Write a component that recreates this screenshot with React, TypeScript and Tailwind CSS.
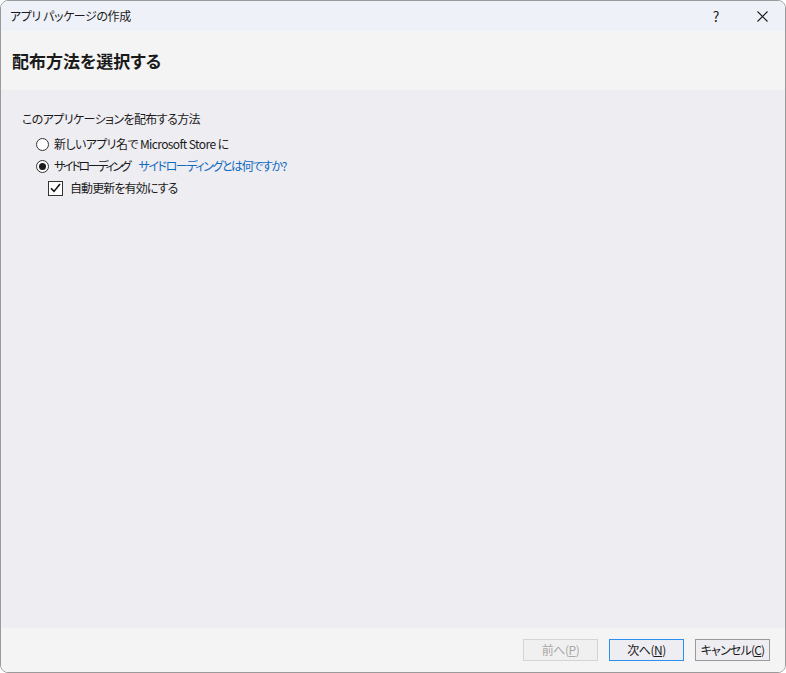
const font = "font-['Segoe_UI','Noto_Sans_CJK_JP','Noto_Sans',sans-serif] [font-feature-settings:'palt']";

function Radio({ checked }: { checked?: boolean }) {
  return (
    <span className="flex h-[13px] w-[13px] items-center justify-center rounded-full border border-[#333] bg-white">
      {checked && <span className="h-[7px] w-[7px] rounded-full bg-[#1a1a1a]" />}
    </span>
  );
}

export default function App() {
  return (
    <div className={`h-[673px] w-[786px] ${font} text-[#1a1a1a]`}>
      <div className="flex h-full w-full flex-col overflow-hidden rounded-t-[8px] rounded-b-[8px] border border-[#9a9a9a]">
        {/* title bar */}
        <div className="flex h-[30px] shrink-0 items-center bg-[#eef2f8] pl-[9px] text-[12px]">
          <span className="flex-1 tracking-[-0.4px]">アプリ パッケージの作成</span>
          <span className="w-[46px] text-center text-[14px]">?</span>
          <span className="flex w-[46px] items-center justify-center">
            <svg width="11" height="11" viewBox="0 0 11 11" stroke="#1a1a1a" strokeWidth="1.1">
              <path d="M0.5 0.5L10.5 10.5M10.5 0.5L0.5 10.5" />
            </svg>
          </span>
        </div>

        {/* header */}
        <div className="flex h-[59px] shrink-0 items-center bg-[#f4f4f4] pl-[11px] text-[17px] font-bold">
          配布方法を選択する
        </div>

        {/* content */}
        <div className="flex flex-1 flex-col bg-[#eeedf2] pl-[21px] pt-[20px] text-[12px]">
          <div className="h-[18px] leading-[18px] tracking-[-0.6px]">このアプリケーションを配布する方法</div>
          <div className="mt-[7px] flex h-[18px] items-center gap-[5px] pl-[14px]">
            <Radio />
            <span className="tracking-[-0.6px]">新しいアプリ名で Microsoft Store に</span>
          </div>
          <div className="mt-[4px] flex h-[18px] items-center gap-[5px] pl-[14px]">
            <Radio checked />
            <span className="tracking-[-2.3px]">サイドローディング</span>
            <span className="ml-[4px] tracking-[-1.4px] text-[#0e6bbf]">サイドローディングとは何ですか?</span>
          </div>
          <div className="mt-[5px] flex h-[16px] items-center gap-[7px] pl-[26px]">
            <span className="flex h-[15px] w-[15px] items-center justify-center border border-[#333] bg-white">
              <svg width="11" height="10" viewBox="0 0 11 10" fill="none" stroke="#111" strokeWidth="1.6">
                <path d="M1 5.2L4 8.4L10 1" />
              </svg>
            </span>
            <span className="tracking-[-0.9px]">自動更新を有効にする</span>
          </div>
        </div>

        {/* footer */}
        <div className="flex h-[44px] shrink-0 items-center justify-end gap-[11px] bg-[#f4f4f4] pr-[15px] text-[12px]">
          <button className="h-[22px] w-[75px] whitespace-nowrap border border-[#d4d4d4] bg-[#f0f0f0] tracking-[-0.5px] text-[#a8a8a8]">
            前へ(<span className="underline">P</span>)
          </button>
          <button className="h-[22px] w-[75px] whitespace-nowrap border border-[#2d8ff0] bg-[#eeedf2] tracking-[-0.5px]">
            次へ(<span className="underline">N</span>)
          </button>
          <button className="h-[22px] w-[75px] whitespace-nowrap border border-[#9a9a9a] bg-[#eeedf2] tracking-[-0.8px]">
            キャンセル(<span className="underline">C</span>)
          </button>
        </div>
      </div>
    </div>
  );
}
